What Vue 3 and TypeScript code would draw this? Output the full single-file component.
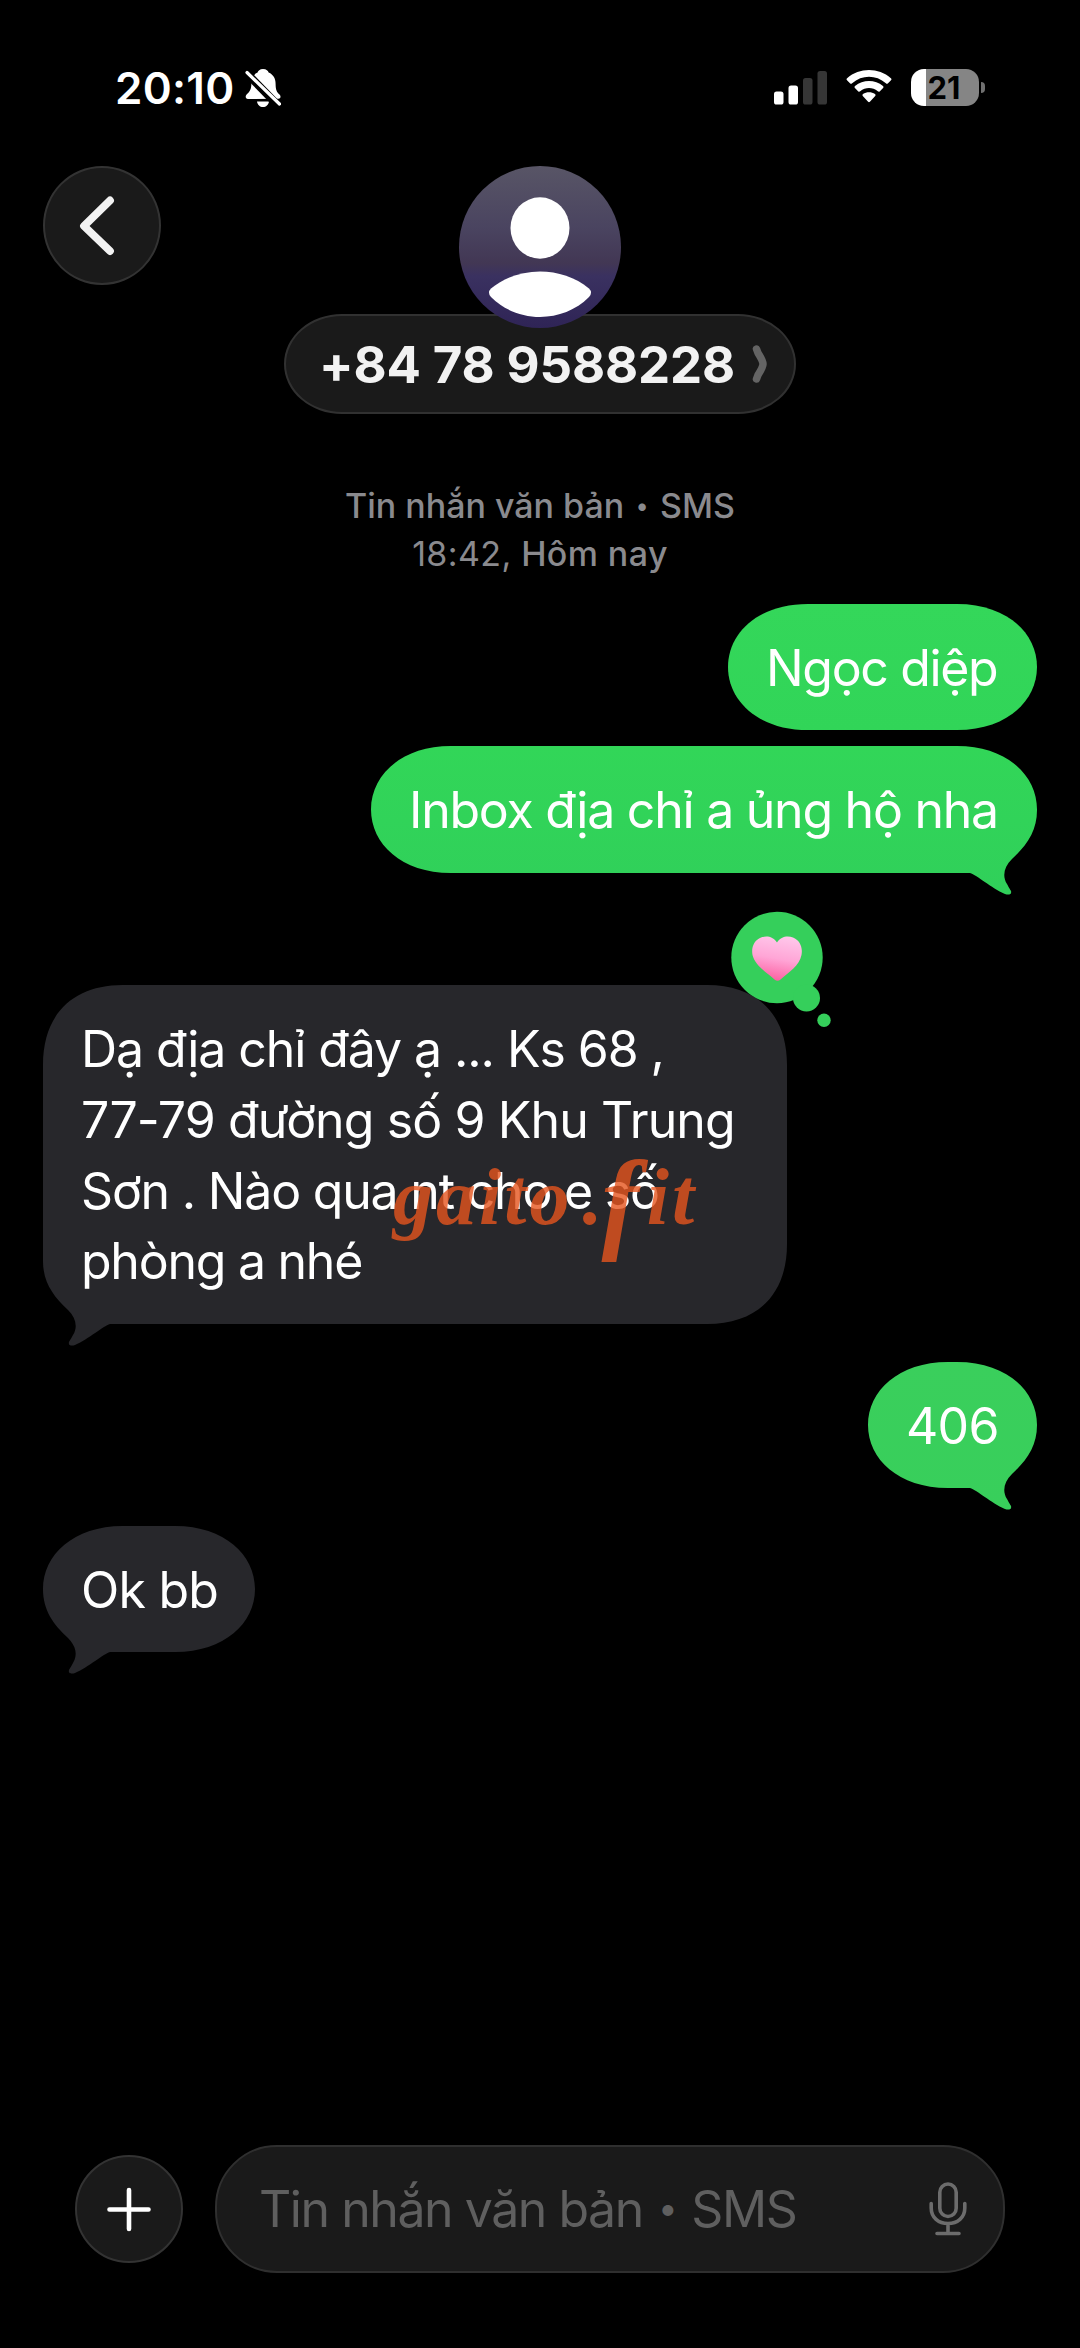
<script setup lang="ts">
interface Message {
  id: number
  side: 'out' | 'in'
  lines: string[]
  width: number
  height: number
  tail: boolean
  gap: number
  top: string
  bottom: string
  tracking: number[]
  reaction?: boolean
}

const messages: Message[] = [
  { id: 1, side: 'out', lines: ['Ngọc diệp'], width: 309, height: 126, tail: false, gap: 0, top: '#34d75a', bottom: '#31d558', tracking: [-1.35] },
  { id: 2, side: 'out', lines: ['Inbox địa chỉ a ủng hộ nha'], width: 666, height: 127, tail: true, gap: 16, top: '#32d658', bottom: '#30d05a', tracking: [-1.25] },
  {
    id: 3,
    side: 'in',
    lines: ['Dạ địa chỉ đây ạ ... Ks 68 ,', '77-79 đường số 9 Khu Trung', 'Sơn . Nào qua nt cho e số', 'phòng a nhé'],
    width: 744,
    height: 339,
    tail: true,
    gap: 112,
    top: '#27272b',
    bottom: '#27272b',
    tracking: [-1.08, -0.88, -1.2, -1.25],
    reaction: true,
  },
  { id: 4, side: 'out', lines: ['406'], width: 169, height: 126, tail: true, gap: 38, top: '#3acf5c', bottom: '#38cf5b', tracking: [-0.7] },
  { id: 5, side: 'in', lines: ['Ok bb'], width: 212, height: 126, tail: true, gap: 38, top: '#27272b', bottom: '#27272b', tracking: [-0.75] },
]

// Continuous-corner bubble outline, with an optional tail at the lower right.
function outline(w: number, h: number, tail: boolean): string {
  const rx = Math.min(80, w / 2)
  const ry = Math.min(80, h / 2)
  const kx = rx * (1 - 0.62)
  const ky = ry * (1 - (h / 2 < 80 ? 0.54 : 0.64))
  const corner = tail
    ? `V${h - 63} C${w} ${h - 42} ${w - 10} ${h - 28} ${w - 25} ${h - 14}` +
      ` C${w - 33} ${h - 6} ${w - 35} ${h + 3} ${w - 30} ${h + 11}` +
      ` C${w - 28} ${h + 15} ${w - 27} ${h + 16} ${w - 26} ${h + 18}` +
      ` C${w - 25} ${h + 22} ${w - 29} ${h + 22} ${w - 32} ${h + 21}` +
      ` C${w - 46} ${h + 15} ${w - 60} ${h + 2} ${w - 67} ${h}`
    : `V${h - ry} C${w} ${h - ky} ${w - kx} ${h} ${w - rx} ${h}`
  return (
    `M0 ${ry} C0 ${ky} ${kx} 0 ${rx} 0 H${w - rx} C${w - kx} 0 ${w} ${ky} ${w} ${ry} ` +
    corner +
    ` H${rx} C${kx} ${h} 0 ${h - ky} 0 ${h - ry} Z`
  )
}
</script>

<template>
  <main class="phone">
    <header class="status">
      <span class="clock">20:10</span>
      <svg class="bell" viewBox="0 0 36 40">
        <path d="M18 1 C21.5 1 23.2 3 23.6 4.6 C28.5 6.5 30.6 11 30.6 16 C30.6 22 32 24.5 34.5 26.5 C36 28 36 30.5 33.5 30.8 L3 31 C.3 31 0 28 1.8 26.3 C5 23.5 6.4 20.8 6.4 15 C6.4 10 8.5 6.3 12.6 4.6 C13 3 14.8 1 18 1 Z M12 33.5 H24 C23.5 37 21 39 18 39 C15 39 12.5 37 12 33.5 Z" fill="#fff" />
        <path d="M-1 2.500 L36 40.500" stroke="#000" stroke-width="8" />
        <path d="M2 4.500 L34.500 36" stroke="#fff" stroke-width="3.200" stroke-linecap="round" />
      </svg>
      <svg class="signal" viewBox="0 0 54 34">
        <rect x="0" y="20.500" width="9.500" height="13" rx="2.600" fill="#fff" />
        <rect x="14.500" y="14.500" width="9.500" height="19" rx="2.600" fill="#fff" />
        <rect x="29" y="7" width="9.500" height="26.500" rx="2.600" fill="#363636" />
        <rect x="43.500" y="0" width="9.500" height="33.500" rx="2.600" fill="#363636" />
      </svg>
      <svg class="wifi" viewBox="0 0 46 34">
        <path d="M1 10.200 Q0 9.200 1.100 8.200 C13.500 -2.600 32.500 -2.600 44.900 8.200 Q46 9.200 45 10.200 L42 13.200 Q41 14.200 39.900 13.200 C30 4.600 16 4.600 6.100 13.200 Q5 14.200 4 13.200 Z" fill="#fff" />
        <path d="M8.900 18 Q7.900 17 9 16 C17 9.300 29 9.300 37 16 Q38.100 17 37.100 18 L33.900 21.200 Q32.900 22.200 31.800 21.300 C26.500 17 19.500 17 14.200 21.300 Q13.100 22.200 12.100 21.200 Z" fill="#fff" />
        <path d="M16.800 26 Q15.800 25 17 24.100 C20.500 21.600 25.500 21.600 29 24.100 Q30.200 25 29.200 26 L23.900 31.800 Q23 32.700 22.100 31.800 Z" fill="#fff" />
      </svg>
      <div class="battery"><span>21</span></div>
      <i class="battery-tip"></i>
    </header>

    <section class="nav">
      <button class="back" aria-label="Quay lại">
        <svg viewBox="0 0 118 118">
          <path d="M67 34 L41 59.500 L67 84.500" fill="none" stroke="#f2f2f2" stroke-width="7.800" stroke-linecap="round" stroke-linejoin="round" />
        </svg>
      </button>
      <div class="contact">
        <div class="avatar">
          <svg viewBox="0 0 162 162">
            <ellipse cx="81" cy="62" rx="29.500" ry="30.700" fill="#fff" />
            <path d="M32 122.500 C59 99.800 103 99.800 130 122.500 Q134 126.500 130 131 C104 157.500 58 157.500 32 131 Q28 126.500 32 122.500 Z" fill="#fff" />
          </svg>
        </div>
        <div class="name">
          <span>+84 78 9588228</span>
          <svg viewBox="0 0 16 40">
            <path d="M4.500 5 L6 9 Q11 17 11 20 Q11 23 6 31 L4.500 35" fill="none" stroke="#646464" stroke-width="7.500" stroke-linecap="round" stroke-linejoin="round" />
          </svg>
        </div>
      </div>
    </section>

    <section class="stamp">
      <p class="service">Tin nhắn văn bản <span class="dot">•</span> SMS</p>
      <p class="time"><span>18:42,</span> Hôm nay</p>
    </section>

    <section class="thread">
      <article
        v-for="m in messages"
        :key="m.id"
        class="bubble"
        :class="m.side"
        :style="{ width: m.width + 'px', height: m.height + 'px', marginTop: m.gap + 'px' }"
      >
        <svg class="shape" :width="m.width" :height="m.height" :viewBox="`0 0 ${m.width} ${m.height}`">
          <defs>
            <linearGradient :id="'fill' + m.id" x1="0" y1="0" x2="0" y2="1">
              <stop offset="0" :stop-color="m.top" />
              <stop offset="1" :stop-color="m.bottom" />
            </linearGradient>
          </defs>
          <path :d="outline(m.width, m.height, m.tail)" :fill="`url(#fill${m.id})`" />
        </svg>
        <p v-for="(line, i) in m.lines" :key="i" class="line" :style="{ letterSpacing: m.tracking[i] + 'px' }">{{ line }}</p>

        <svg v-if="m.reaction" class="reaction" viewBox="0 0 102 118">
          <defs>
            <linearGradient id="heart" x1="0.600" y1="0" x2="0.400" y2="1">
              <stop offset="0" stop-color="#ffc6ea" />
              <stop offset="0.500" stop-color="#ffa5d6" />
              <stop offset="1" stop-color="#fb5fa0" />
            </linearGradient>
          </defs>
          <g fill="#35cf5b">
            <circle cx="46" cy="46.500" r="45.700" />
            <circle cx="75.500" cy="87" r="13.500" />
            <circle cx="93" cy="109.300" r="6.700" />
          </g>
          <path d="M46 31.500 C50 25 57 24.500 62 26.500 C68.500 29 72 36 70.500 44 C68.500 54.500 58 61 49.500 68.500 Q46.500 71 43.500 68.500 C35 61 24 54.500 21.500 44 C20 36 23.500 29 30 26.500 C35 24.500 42 25 46 31.500 Z" fill="url(#heart)" />
        </svg>
        <div v-if="m.reaction" class="watermark">gaito<b>.</b><em>f</em>it</div>
      </article>
    </section>

    <footer class="composer">
      <button class="plus" aria-label="Thêm">
        <svg viewBox="0 0 108 108">
          <path d="M54 35 V74 M34.500 54.500 H73.500" stroke="#fff" stroke-width="4.600" stroke-linecap="round" />
        </svg>
      </button>
      <div class="field">
        <span>Tin nhắn văn bản <span class="dot">•</span> SMS</span>
        <svg viewBox="0 0 38 54" fill="none" stroke="#6c6c6c" stroke-width="3.600" stroke-linecap="round">
          <rect x="10.800" y="2" width="16.400" height="32.500" rx="8.200" />
          <path d="M2.200 21.500 V26 C2.200 35.500 9.500 41.500 19 41.500 C28.500 41.500 35.800 35.500 35.800 26 V21.500 M19 41.500 V51 M8 51.500 H30" />
        </svg>
      </div>
    </footer>
  </main>
</template>

<style>
body {
  margin: 0;
  background: #000;
}
</style>

<style scoped>
.phone {
  box-sizing: border-box;
  width: 1080px;
  height: 2348px;
  background: #000;
  color: #fff;
  font-family: Inter, "Liberation Sans", sans-serif;
  display: flex;
  flex-direction: column;
  overflow: hidden;
}
p {
  margin: 0;
}
button {
  padding: 0;
  font: inherit;
}
svg {
  display: block;
}
.status {
  box-sizing: border-box;
  height: 166px;
  padding: 68px 95px 0 115px;
  display: flex;
  align-items: flex-start;
}
.clock {
  width: 130px;
  font-size: 44px;
  line-height: 40px;
  font-weight: 600;
  letter-spacing: 0.300px;
  white-space: nowrap;
}
.bell {
  width: 36px;
  height: 40px;
}
.signal {
  width: 54px;
  height: 34px;
  margin: 3px 0 0 auto;
}
.wifi {
  width: 46px;
  height: 34px;
  margin: 2px 0 0 18px;
}
.battery {
  box-sizing: border-box;
  width: 68px;
  height: 37px;
  margin: 1px 0 0 19px;
  padding-right: 2px;
  border-radius: 13px;
  background: linear-gradient(90deg, #fff 15px, #858585 15px);
  color: #000;
  font-size: 31px;
  line-height: 37px;
  font-weight: 700;
  text-align: center;
}
.battery-tip {
  width: 4px;
  height: 11px;
  margin: 14px 0 0 2px;
  border-radius: 0 5px 5px 0;
  background: #707070;
}
.nav {
  height: 248px;
  padding: 0 43px;
  display: grid;
  grid-template-columns: 118px 1fr 118px;
}
.back,
.plus {
  box-sizing: border-box;
  border: 2px solid #333;
  border-radius: 50%;
  background: #1a1a1a;
}
.back {
  width: 118px;
  height: 119px;
}
.back svg {
  width: 118px;
  height: 119px;
  margin: -2px;
}
.contact {
  display: flex;
  flex-direction: column;
  align-items: center;
}
.avatar {
  width: 162px;
  height: 162px;
  border-radius: 50%;
  background: linear-gradient(#585566 0%, #4a4460 38%, #423754 60%, #3a3160 68%, #2f2456 100%);
  z-index: 1;
}
.name {
  box-sizing: border-box;
  width: 512px;
  height: 100px;
  margin-top: -14px;
  padding: 0 26px 0 33px;
  border: 2px solid #313131;
  border-radius: 58px / 50px;
  background: #1a1a1a;
  color: #f2f2f2;
  display: flex;
  align-items: center;
  justify-content: space-between;
  font-size: 51px;
  font-weight: 700;
  letter-spacing: -0.150px;
  line-height: 95px;
  white-space: nowrap;
}
.name svg {
  width: 16px;
  height: 40px;
}
.stamp {
  padding-top: 68px;
  height: 122px;
  color: #8a8a8e;
  font-size: 34px;
  line-height: 48px;
  font-weight: 500;
  text-align: center;
}
.dot {
  margin: 0 2.500px;
  font-size: 0.700em;
  line-height: 0;
  vertical-align: 0.170em;
}
.time {
  letter-spacing: 0.400px;
}
.time span {
  font-weight: 400;
}
.thread {
  flex: 1;
  padding: 0 43px;
  display: flex;
  flex-direction: column;
}
.bubble {
  box-sizing: border-box;
  position: relative;
  padding: 29px 0 0 38px;
  flex: none;
}
.out {
  align-self: flex-end;
}
.shape {
  position: absolute;
  inset: 0;
  overflow: visible;
}
.in .shape {
  transform: scaleX(-1);
}
.line {
  position: relative;
  height: 70.800px;
  font-size: 50px;
  line-height: 70.800px;
  white-space: pre;
}
.reaction {
  position: absolute;
  left: 688px;
  top: -74px;
  width: 102px;
  height: 118px;
}
.watermark {
  position: absolute;
  left: 350px;
  top: 170px;
  height: 84px;
  color: rgba(230, 85, 30, 0.8);
  font-family: "Liberation Serif", serif;
  font-size: 80px;
  line-height: 84px;
  letter-spacing: 3px;
  font-style: italic;
  font-weight: 700;
  white-space: nowrap;
}
.watermark b {
  margin: 0 2px 0 10px;
}
.watermark em {
  margin: 0 5px 0 -6px;
  font-size: 112px;
  line-height: 0;
  vertical-align: -14px;
}
.composer {
  height: 203px;
  padding: 0 75px;
  display: flex;
  align-items: flex-start;
}
.plus {
  width: 108px;
  height: 108px;
  margin-top: 10px;
}
.plus svg {
  width: 108px;
  height: 108px;
  margin: -2px;
}
.field {
  box-sizing: border-box;
  width: 790px;
  height: 128px;
  margin-left: 32px;
  padding: 0 36px 0 42px;
  border: 2px solid #2f2f2f;
  border-radius: 62px;
  background: #1a1a1a;
  color: #5f5f5f;
  display: flex;
  flex: none;
  align-items: center;
  justify-content: space-between;
  font-size: 50px;
  letter-spacing: -1.450px;
  white-space: nowrap;
}
.field svg {
  width: 38px;
  height: 54px;
}
</style>
